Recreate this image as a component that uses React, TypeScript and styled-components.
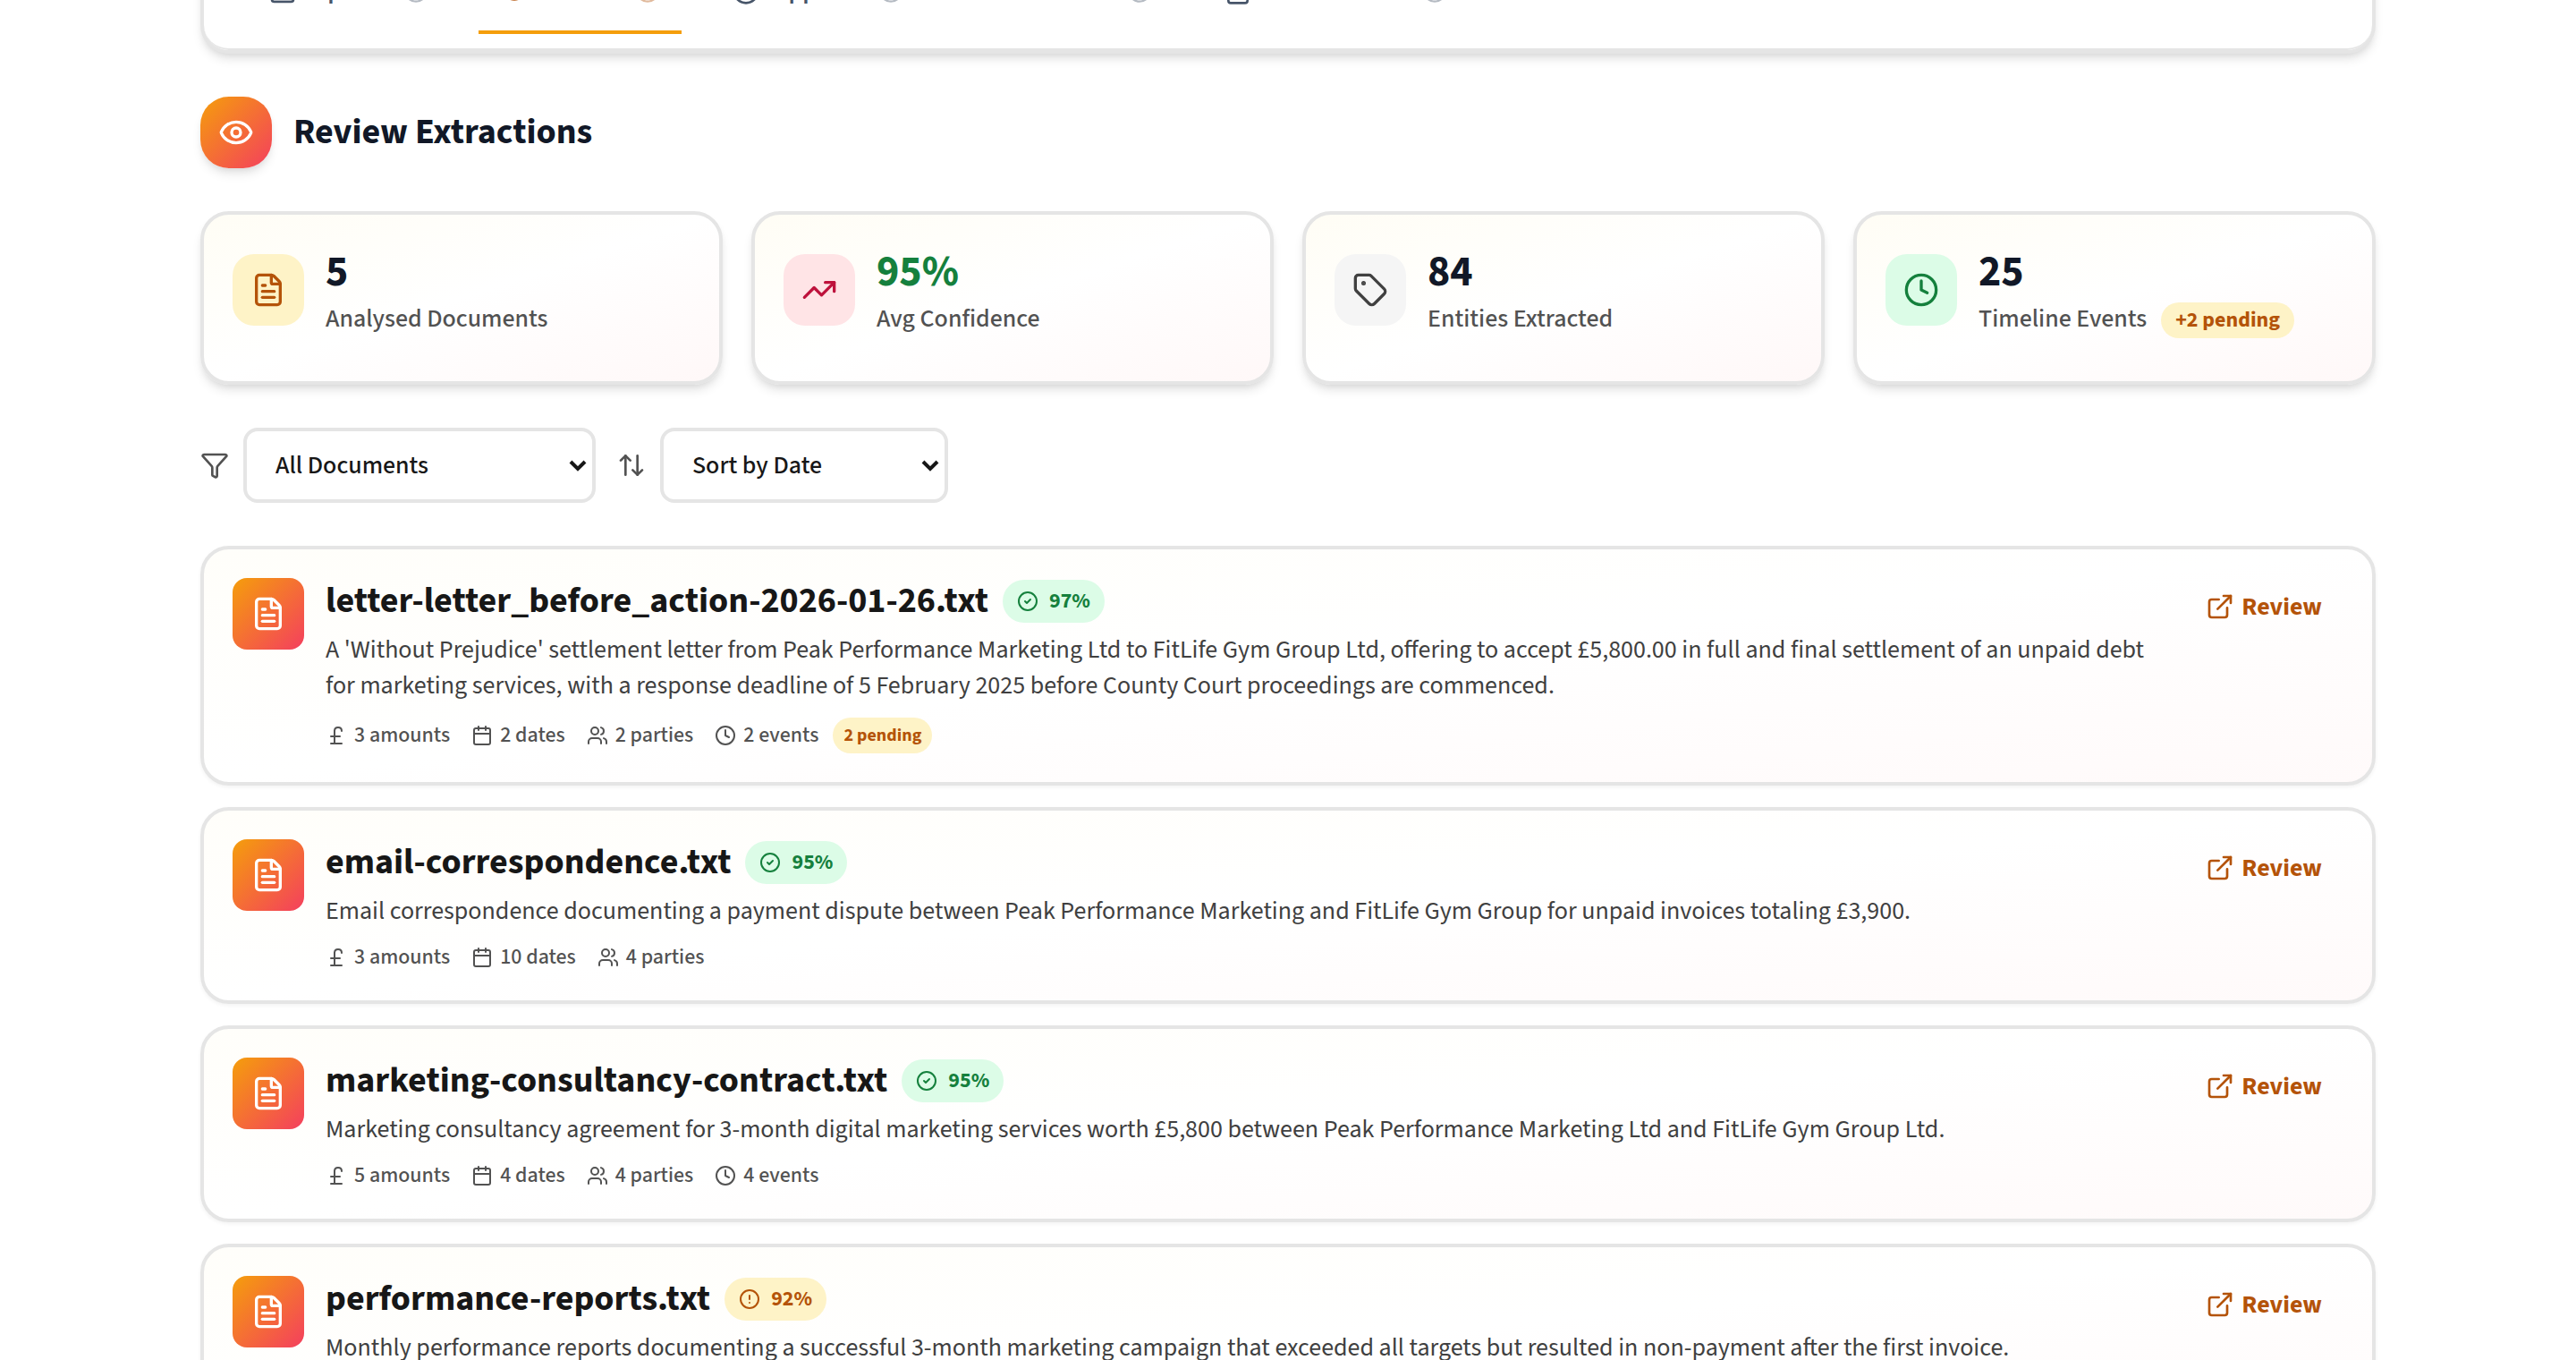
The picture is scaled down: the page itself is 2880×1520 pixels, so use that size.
import React from "react";
import styled, { createGlobalStyle, css } from "styled-components";
import {
  ArrowUpDown,
  Calendar,
  CircleAlert,
  CircleCheck,
  Clock,
  ExternalLink,
  Eye,
  FileText,
  Funnel,
  PoundSterling,
  Tag,
  TrendingUp,
  Users,
  type LucideIcon,
} from "lucide-react";

const color = {
  border: "#e5e5e5",
  ink: "#111827",
  heading: "#171717",
  body: "#404040",
  muted: "#525252",
  slate: "#475569",
  amber: "#b45309",
  amberBg: "#fef3c7",
  amberLine: "#f59e0b",
  green: "#15803d",
  greenBg: "#dcfce7",
  rose: "#be123c",
  roseBg: "#ffe4e6",
  neutralBg: "#f5f5f5",
};

const GlobalStyle = createGlobalStyle`
  *, *::before, *::after { box-sizing: border-box; }
  body {
    margin: 0;
    background: #ffffff;
    color: ${color.heading};
    font-family: "Source Sans 3", "Noto Sans CJK SC", "Noto Sans", sans-serif;
    font-size: 28px;
    line-height: 40px;
  }
  h1, h2, p, ul { margin: 0; padding: 0; }
  button, select { font: inherit; color: inherit; }
`;

const Viewport = styled.div`
  overflow: hidden;
  height: 100vh;
`;

const Page = styled.div`
  display: flex;
  flex-direction: column;
  gap: 48px;
  max-width: 2560px;
  margin: 0 auto;
  padding: 0 64px;
`;

const NavCard = styled.nav`
  margin-top: -74px;
  border: 4px solid ${color.border};
  border-radius: 32px;
  background: #ffffff;
  box-shadow: 0 8px 12px -2px rgba(0, 0, 0, 0.1), 0 4px 8px -4px rgba(0, 0, 0, 0.1);
`;

const TabList = styled.div`
  display: flex;
  gap: 32px;
  padding: 16px 48px;
  border-bottom: 2px solid ${color.border};
  border-radius: 0 0 28px 28px;
`;

const Tab = styled.button<{ $active?: boolean }>`
  display: flex;
  align-items: center;
  gap: 16px;
  padding: 24px;
  border: 0;
  border-bottom: 4px solid ${(p) => (p.$active ? color.amberLine : "transparent")};
  background: none;
  color: ${(p) => (p.$active ? color.amber : color.slate)};
  font-weight: 600;
`;

const TabState = styled(CircleCheck)`
  opacity: 0.4;
`;

const PageHeader = styled.header`
  display: flex;
  align-items: center;
  gap: 24px;
`;

const IconTile = styled.span<{ $bg?: string; $fg?: string; $radius?: number; $raised?: boolean }>`
  display: flex;
  flex: none;
  align-items: center;
  justify-content: center;
  width: 80px;
  height: 80px;
  border-radius: ${(p) => p.$radius ?? 24}px;
  background: ${(p) => p.$bg ?? `linear-gradient(135deg, ${color.amberLine}, #f43f5e)`};
  color: ${(p) => p.$fg ?? "#ffffff"};
  ${(p) =>
    p.$raised &&
    css`
      box-shadow: 0 8px 12px -2px rgba(0, 0, 0, 0.1), 0 4px 8px -4px rgba(0, 0, 0, 0.1);
    `}
`;

const PageTitle = styled.h1`
  color: ${color.ink};
  font-size: 40px;
  font-weight: 700;
  line-height: 52px;
`;

const surface = css`
  border: 4px solid ${color.border};
  border-radius: 32px;
`;

const Stats = styled.section`
  display: grid;
  grid-template-columns: repeat(4, 1fr);
  gap: 32px;
`;

const StatCard = styled.article`
  ${surface}
  display: flex;
  align-items: center;
  gap: 24px;
  padding: 32px 32px 50px;
  background: linear-gradient(to bottom right, #fffdf5, #ffffff 50%, #fff8f8);
  box-shadow: 0 8px 12px -2px rgba(0, 0, 0, 0.1), 0 4px 8px -4px rgba(0, 0, 0, 0.1);
`;

const StatValue = styled.p<{ $color?: string }>`
  color: ${(p) => p.$color ?? color.ink};
  font-size: 48px;
  font-weight: 700;
  line-height: 64px;
`;

const StatLabel = styled.p`
  display: flex;
  align-items: baseline;
  gap: 16px;
  height: 40px;
  color: ${color.muted};
  font-weight: 500;
`;

const PendingBadge = styled.span<{ $small?: boolean }>`
  padding: 0 ${(p) => (p.$small ? 12 : 16)}px;
  border-radius: 20px;
  background: ${color.amberBg};
  color: ${color.amber};
  font-size: ${(p) => (p.$small ? 20 : 24)}px;
  font-weight: 700;
  line-height: 40px;
`;

const Toolbar = styled.section`
  display: flex;
  align-items: center;
  gap: 24px;
  color: ${color.muted};
`;

const Field = styled.label`
  display: flex;
  align-items: center;
  gap: 16px;
`;

const SelectBox = styled.span<{ $width: number }>`
  display: grid;
  grid-template-columns: 1fr 30px;
  align-items: center;
  width: ${(p) => p.$width}px;
  color: ${color.heading};

  svg {
    grid-area: 1 / 2;
    pointer-events: none;
  }
`;

const Select = styled.select`
  grid-area: 1 / 1 / 2 / 3;
  height: 84px;
  padding: 0 32px;
  border: 4px solid ${color.border};
  border-radius: 16px;
  background: #ffffff;
  font-weight: 500;
  appearance: none;
`;

const DocList = styled.ul`
  display: flex;
  flex-direction: column;
  gap: 24px;
  list-style: none;
`;

const DocCard = styled.li`
  ${surface}
  display: flex;
  align-items: flex-start;
  gap: 24px;
  padding: 32px;
  background: linear-gradient(to bottom right, #fffefa, #ffffff 50%, #fffafa);
  box-shadow: 0 2px 4px rgba(0, 0, 0, 0.05);
`;

const DocBody = styled.div`
  flex: 1;
  min-width: 0;
`;

const DocHeading = styled.div`
  display: flex;
  align-items: center;
  gap: 16px;
`;

const DocTitle = styled.h2`
  font-size: 40px;
  font-weight: 700;
  line-height: 52px;
`;

const Confidence = styled.span<{ $low: boolean }>`
  display: flex;
  align-items: center;
  gap: 12px;
  height: 48px;
  padding: 0 16px;
  border-radius: 24px;
  background: ${(p) => (p.$low ? color.amberBg : color.greenBg)};
  color: ${(p) => (p.$low ? color.amber : color.green)};
  font-size: 24px;
  font-weight: 700;
`;

const Summary = styled.p`
  margin-top: 8px;
  color: ${color.body};
`;

const Meta = styled.div`
  display: flex;
  align-items: center;
  gap: 24px;
  margin-top: 16px;
  color: ${color.muted};
  font-size: 24px;
  font-weight: 500;
  line-height: 32px;
`;

const MetaItem = styled.span`
  display: flex;
  align-items: center;
  gap: 8px;
`;

const MetaGroup = styled.span`
  display: flex;
  align-items: center;
  gap: 16px;
`;

const ReviewButton = styled.button`
  display: flex;
  flex: none;
  align-items: center;
  gap: 8px;
  height: 64px;
  padding: 0 24px;
  border: 0;
  border-radius: 16px;
  background: none;
  color: ${color.amber};
  font-weight: 700;
`;

const UploadTray: React.FC = () => (
  <svg width="32" height="32" viewBox="0 0 24 24" fill="none" stroke="currentColor" strokeWidth="2" strokeLinecap="round" strokeLinejoin="round">
    <path d="M21 13v6a2 2 0 0 1-2 2H5a2 2 0 0 1-2-2v-6z" fill="currentColor" fillOpacity="0.2" />
    <path d="M12 3v9M7 8l5-5 5 5" />
  </svg>
);

const Chevron: React.FC = () => (
  <svg width="20" height="14" viewBox="0 0 20 14" fill="none" stroke="currentColor" strokeWidth="4">
    <path d="M2 3l8 8 8-8" />
  </svg>
);

const tabs: { label: string; icon: React.ElementType; active?: boolean }[] = [
  { label: "Upload", icon: UploadTray },
  { label: "Review", icon: Eye, active: true },
  { label: "Approve", icon: CircleCheck },
  { label: "Timeline", icon: TrendingUp },
  { label: "Court Bundle", icon: FileText },
];

const stats: { value: string; label: string; icon: LucideIcon; bg: string; fg: string; valueColor?: string; pending?: string }[] = [
  { value: "5", label: "Analysed Documents", icon: FileText, bg: color.amberBg, fg: color.amber },
  { value: "95%", label: "Avg Confidence", icon: TrendingUp, bg: color.roseBg, fg: color.rose, valueColor: color.green },
  { value: "84", label: "Entities Extracted", icon: Tag, bg: color.neutralBg, fg: color.body },
  { value: "25", label: "Timeline Events", icon: Clock, bg: color.greenBg, fg: color.green, pending: "+2 pending" },
];

interface Doc {
  name: string;
  confidence: number;
  summary: string;
  amounts: number;
  dates: number;
  parties: number;
  events?: number;
  pending?: number;
}

const docs: Doc[] = [
  {
    name: "letter-letter_before_action-2026-01-26.txt",
    confidence: 97,
    summary:
      "A 'Without Prejudice' settlement letter from Peak Performance Marketing Ltd to FitLife Gym Group Ltd, offering to accept £5,800.00 in full and final settlement of an unpaid debt for marketing services, with a response deadline of 5 February 2025 before County Court proceedings are commenced.",
    amounts: 3,
    dates: 2,
    parties: 2,
    events: 2,
    pending: 2,
  },
  {
    name: "email-correspondence.txt",
    confidence: 95,
    summary:
      "Email correspondence documenting a payment dispute between Peak Performance Marketing and FitLife Gym Group for unpaid invoices totaling £3,900.",
    amounts: 3,
    dates: 10,
    parties: 4,
  },
  {
    name: "marketing-consultancy-contract.txt",
    confidence: 95,
    summary:
      "Marketing consultancy agreement for 3-month digital marketing services worth £5,800 between Peak Performance Marketing Ltd and FitLife Gym Group Ltd.",
    amounts: 5,
    dates: 4,
    parties: 4,
    events: 4,
  },
  {
    name: "performance-reports.txt",
    confidence: 92,
    summary:
      "Monthly performance reports documenting a successful 3-month marketing campaign that exceeded all targets but resulted in non-payment after the first invoice.",
    amounts: 3,
    dates: 4,
    parties: 2,
  },
];

const DocRow: React.FC<{ doc: Doc }> = ({ doc }) => {
  const low = doc.confidence < 95;
  const StateIcon = low ? CircleAlert : CircleCheck;
  return (
    <DocCard>
      <IconTile $radius={16}>
        <FileText size={40} />
      </IconTile>
      <DocBody>
        <DocHeading>
          <DocTitle>{doc.name}</DocTitle>
          <Confidence $low={low}>
            <StateIcon size={24} />
            {`${doc.confidence}%`}
          </Confidence>
        </DocHeading>
        <Summary>{doc.summary}</Summary>
        <Meta>
          <MetaItem>
            <PoundSterling size={24} />
            {`${doc.amounts} amounts`}
          </MetaItem>
          <MetaItem>
            <Calendar size={24} />
            {`${doc.dates} dates`}
          </MetaItem>
          <MetaItem>
            <Users size={24} />
            {`${doc.parties} parties`}
          </MetaItem>
          {doc.events && (
            <MetaGroup>
              <MetaItem>
                <Clock size={24} />
                {`${doc.events} events`}
              </MetaItem>
              {doc.pending && <PendingBadge $small>{`${doc.pending} pending`}</PendingBadge>}
            </MetaGroup>
          )}
        </Meta>
      </DocBody>
      <ReviewButton type="button">
        <ExternalLink size={32} />
        Review
      </ReviewButton>
    </DocCard>
  );
};

export default function App() {
  return (
    <Viewport>
      <GlobalStyle />
      <Page>
        <NavCard>
          <TabList>
            {tabs.map(({ label, icon: Icon, active }) => (
              <Tab key={label} type="button" $active={active}>
                <Icon size={32} />
                {label}
                <TabState size={28} />
              </Tab>
            ))}
          </TabList>
        </NavCard>

        <PageHeader>
          <IconTile $radius={32} $raised>
            <Eye size={40} />
          </IconTile>
          <PageTitle>Review Extractions</PageTitle>
        </PageHeader>

        <Stats>
          {stats.map(({ value, label, icon: Icon, bg, fg, valueColor, pending }) => (
            <StatCard key={label}>
              <IconTile $bg={bg} $fg={fg}>
                <Icon size={40} />
              </IconTile>
              <div>
                <StatValue $color={valueColor}>{value}</StatValue>
                <StatLabel>
                  {label}
                  {pending && <PendingBadge>{pending}</PendingBadge>}
                </StatLabel>
              </div>
            </StatCard>
          ))}
        </Stats>

        <Toolbar>
          <Field>
            <Funnel size={32} />
            <SelectBox $width={394}>
              <Select aria-label="Filter documents" defaultValue="all">
                <option value="all">All Documents</option>
              </Select>
              <Chevron />
            </SelectBox>
          </Field>
          <Field>
            <ArrowUpDown size={32} />
            <SelectBox $width={322}>
              <Select aria-label="Sort documents" defaultValue="date">
                <option value="date">Sort by Date</option>
              </Select>
              <Chevron />
            </SelectBox>
          </Field>
        </Toolbar>

        <DocList>
          {docs.map((doc) => (
            <DocRow key={doc.name} doc={doc} />
          ))}
        </DocList>
      </Page>
    </Viewport>
  );
}
